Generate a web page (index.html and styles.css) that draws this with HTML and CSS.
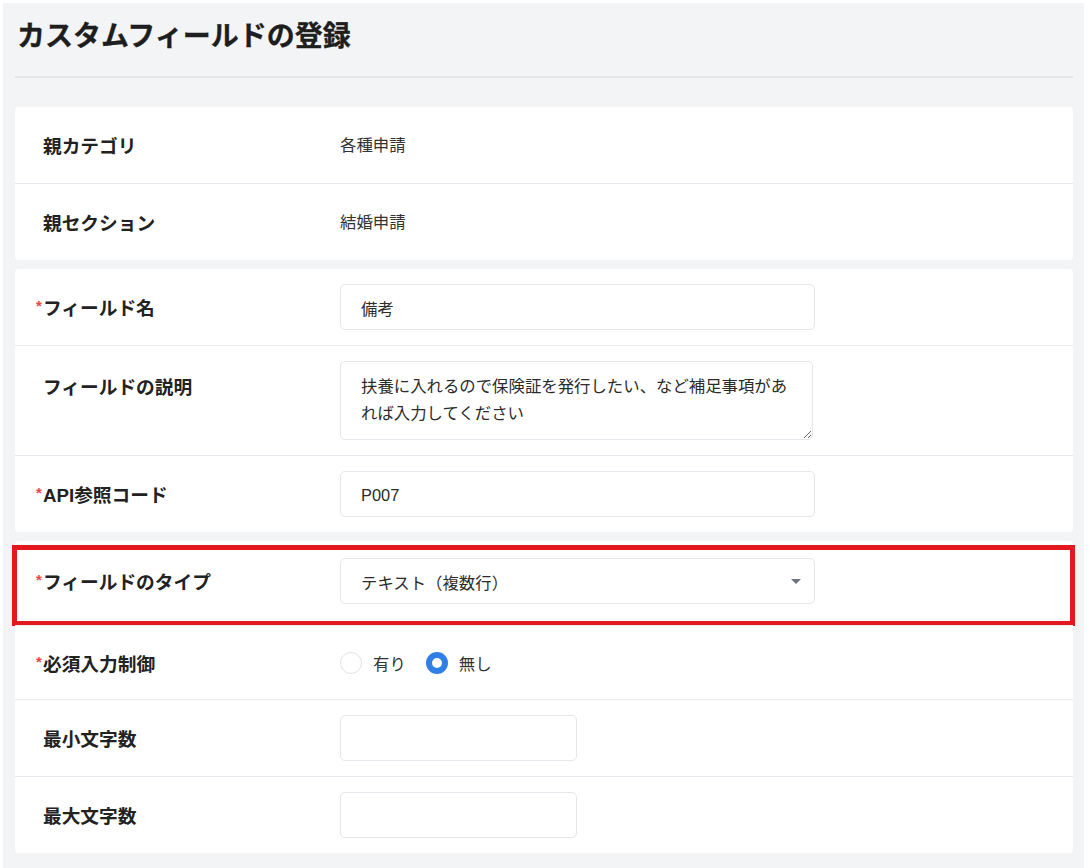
FILE: index.html
```html
<!DOCTYPE html>
<html lang="ja">
<head>
<meta charset="utf-8">
<title>カスタムフィールドの登録</title>
<link rel="stylesheet" href="styles.css">
</head>
<body>
<div class="page">
  <div class="head">
    <h1 class="title">カスタムフィールドの登録</h1>
  </div>

  <div class="card">
    <div class="row">
      <div class="label"><span class="req"></span>親カテゴリ</div>
      <div class="value"><span class="value-text">各種申請</span></div>
    </div>
    <div class="row">
      <div class="label"><span class="req"></span>親セクション</div>
      <div class="value"><span class="value-text">結婚申請</span></div>
    </div>
  </div>

  <div class="card">
    <div class="row">
      <div class="label"><span class="req">*</span>フィールド名</div>
      <div class="value"><div class="input">備考</div></div>
    </div>
    <div class="row row-top">
      <div class="label label-top"><span class="req"></span>フィールドの説明</div>
      <div class="value"><textarea class="textarea">扶養に入れるので保険証を発行したい、など補足事項があれば入力してください</textarea></div>
    </div>
    <div class="row">
      <div class="label"><span class="req">*</span>API参照コード</div>
      <div class="value"><div class="input">P007</div></div>
    </div>
  </div>

  <div class="card">
    <div class="row row-type">
      <div class="label"><span class="req">*</span>フィールドのタイプ</div>
      <div class="value">
        <div class="input select">
          <span>テキスト（複数行）</span>
          <svg class="caret" width="10" height="5" viewBox="0 0 10 5"><path d="M0 0H10L5 5Z" fill="#6b7280"/></svg>
        </div>
      </div>
    </div>
    <div class="row row-radio">
      <div class="label"><span class="req">*</span>必須入力制御</div>
      <div class="value radios">
        <span class="radio-item"><span class="radio"></span>有り</span>
        <span class="radio-item"><span class="radio checked"></span>無し</span>
      </div>
    </div>
    <div class="row">
      <div class="label"><span class="req"></span>最小文字数</div>
      <div class="value"><div class="input short"></div></div>
    </div>
    <div class="row">
      <div class="label"><span class="req"></span>最大文字数</div>
      <div class="value"><div class="input short"></div></div>
    </div>
  </div>
</div>
</body>
</html>
```

FILE: styles.css
```css
* { box-sizing: border-box; }

html, body {
  margin: 0;
  padding: 0;
  background: #ffffff;
}

body {
  font-family: "Liberation Sans", "Noto Sans CJK JP", sans-serif;
  color: #2b2b2b;
}

.page {
  margin: 3px 7px 0 3px;
  min-height: 865px;
  background: #f3f4f6;
  padding: 13px 11px 12px 12px;
}

.head {
  border-bottom: 2px solid #e4e6e9;
  padding: 0 0 18px 2px;
}

.title {
  margin: 0;
  font-size: 28px;
  line-height: 42px;
  font-weight: 700;
  color: #1e1e1e;
  -webkit-text-stroke: 0.3px #1e1e1e;
}

.card {
  background: #ffffff;
  border-radius: 4px;
  margin-top: 9px;
}

.head + .card {
  margin-top: 29px;
}

.row {
  position: relative;
  display: grid;
  grid-template-columns: 325px 1fr;
  align-items: center;
  padding: 15px 0;
  border-top: 1px solid #e7eaef;
}

.row:first-child {
  border-top: none;
}

.row-top {
  align-items: start;
}

.row-type {
  padding: 17px 0 21px;
}

.row-type::after {
  content: "";
  position: absolute;
  top: 4px;
  left: -3px;
  right: -2px;
  bottom: -1px;
  border: 5px solid #e3191f;
  pointer-events: none;
}

.row-radio {
  padding: 14px 0 13px;
}

.label {
  padding-left: 21px;
  padding-top: 3px;
  font-size: 18.7px;
  line-height: 28px;
  font-weight: 700;
  color: #222222;
  display: flex;
  align-items: flex-start;
}

.label-top {
  margin-top: 10px;
}

.req {
  display: inline-block;
  width: 7px;
  color: #ef4444;
  font-size: 15px;
  line-height: 15px;
  font-weight: 700;
  margin-top: 3px;
}

.value {
  min-height: 46px;
  display: flex;
  align-items: center;
  font-size: 16.4px;
  color: #333333;
}

.value-text {
  padding-bottom: 3px;
}

.input {
  width: 475px;
  height: 46px;
  border: 1px solid #e3e6eb;
  border-radius: 5px;
  background: #ffffff;
  padding: 2px 20px 0;
  display: flex;
  align-items: center;
  font-size: 16.4px;
  color: #2b2b2b;
}

.input.short {
  width: 237px;
}

.select {
  justify-content: space-between;
  padding-right: 13px;
}

.caret {
  display: block;
  margin-top: -2px;
}

.textarea {
  display: block;
  width: 473px;
  height: 79px;
  border: 1px solid #e3e6eb;
  border-radius: 5px;
  padding: 11px 20px;
  font-family: "Liberation Sans", "Noto Sans CJK JP", sans-serif;
  font-size: 16.4px;
  line-height: 27px;
  color: #2b2b2b;
  resize: both;
  overflow: hidden;
  outline: none;
}

.radios {
  gap: 20px;
}

.radio-item {
  display: inline-flex;
  align-items: center;
  gap: 11px;
  font-size: 16.4px;
  color: #333333;
}

.radio {
  width: 22px;
  height: 22px;
  border-radius: 50%;
  border: 1.5px solid #dfe2e7;
  background: #ffffff;
}

.radio.checked {
  border: 6px solid #2f7fe6;
}
```
